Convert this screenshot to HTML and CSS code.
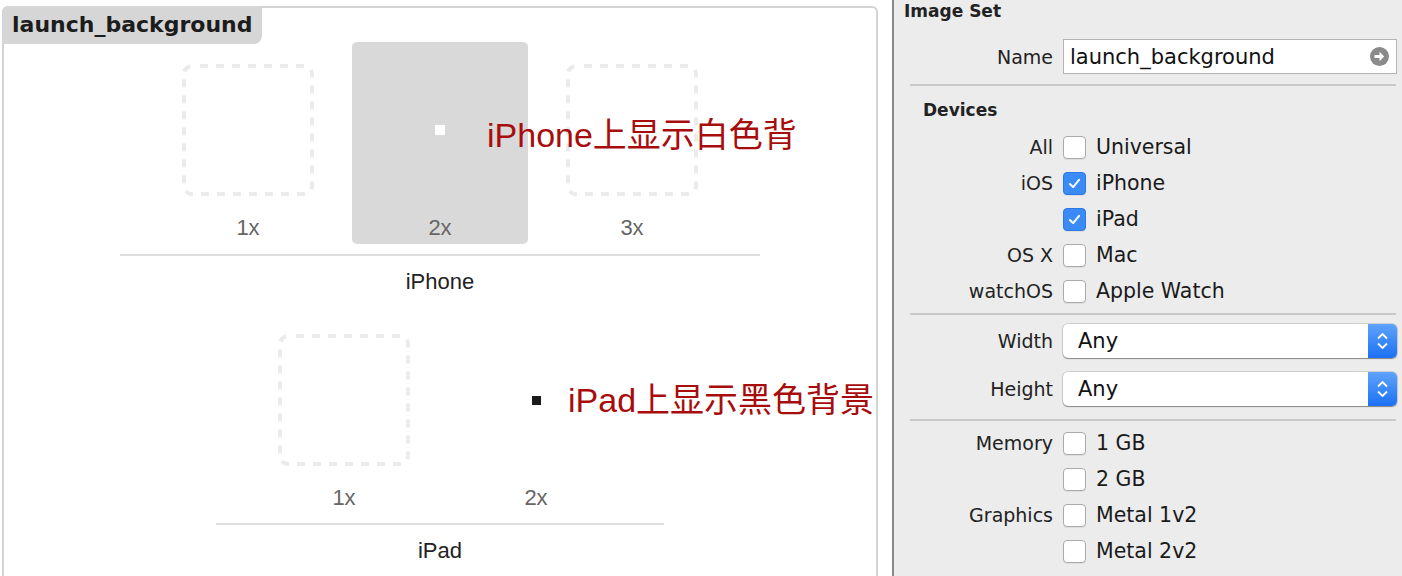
FILE: index.html
```html
<!DOCTYPE html>
<html lang="en">
<head>
<meta charset="UTF-8">
<title>launch_background</title>
<link rel="stylesheet" href="styles.css">
</head>
<body>
<div class="window">
  <div class="editor">
    <div class="canvas">
      <div class="tab">launch_background</div>

      <div class="group group-iphone">
        <div class="cells">
          <div class="cell">
            <svg class="slot" viewBox="0 0 132 132"><rect x="2" y="2" width="128" height="128" rx="8"/></svg>
            <span class="scale">1x</span>
          </div>
          <div class="cell selected">
            <div class="slot"><span class="pixel pixel-white"></span></div>
            <span class="scale">2x</span>
          </div>
          <div class="cell">
            <svg class="slot" viewBox="0 0 132 132"><rect x="2" y="2" width="128" height="128" rx="8"/></svg>
            <span class="scale">3x</span>
          </div>
        </div>
        <div class="device">iPhone</div>
      </div>

      <div class="group group-ipad">
        <div class="cells">
          <div class="cell">
            <svg class="slot" viewBox="0 0 132 132"><rect x="2" y="2" width="128" height="128" rx="8"/></svg>
            <span class="scale">1x</span>
          </div>
          <div class="cell">
            <div class="slot"><span class="pixel pixel-black"></span></div>
            <span class="scale">2x</span>
          </div>
        </div>
        <div class="device">iPad</div>
      </div>

      <!-- annotations -->
      <p class="note note-iphone">iPhone上显示白色背</p>
      <p class="note note-ipad">iPad上显示黑色背景</p>
    </div>
  </div>

  <div class="inspector">
    <div class="title">Image Set</div>

    <div class="row name-row">
      <span class="label">Name</span>
      <div class="field">
        <span>launch_background</span>
        <svg class="go" viewBox="0 0 19 19"><circle cx="9.5" cy="9.5" r="9.5"/><path d="M4.5 8h5V4.8L14.2 9.5 9.5 14.2V11h-5z"/></svg>
      </div>
    </div>

    <div class="sep"></div>
    <div class="section">Devices</div>

    <div class="row check-row">
      <span class="label">All</span>
      <label class="check"><span class="box"></span>Universal</label>
    </div>
    <div class="row check-row">
      <span class="label">iOS</span>
      <label class="check"><span class="box on"><svg viewBox="0 0 23 23"><polyline points="6.5,12 10,15.5 16.5,7.5"/></svg></span>iPhone</label>
    </div>
    <div class="row check-row">
      <span class="label"></span>
      <label class="check"><span class="box on"><svg viewBox="0 0 23 23"><polyline points="6.5,12 10,15.5 16.5,7.5"/></svg></span>iPad</label>
    </div>
    <div class="row check-row">
      <span class="label">OS X</span>
      <label class="check"><span class="box"></span>Mac</label>
    </div>
    <div class="row check-row">
      <span class="label">watchOS</span>
      <label class="check"><span class="box"></span>Apple Watch</label>
    </div>

    <div class="sep sep-tight"></div>

    <div class="row popup-row first">
      <span class="label">Width</span>
      <div class="popup"><span>Any</span><span class="stepper"><svg viewBox="0 0 29 34"><path d="M10 14.5l4.5-4.5 4.5 4.5M10 19.5l4.5 4.5 4.5-4.5"/></svg></span></div>
    </div>
    <div class="row popup-row">
      <span class="label">Height</span>
      <div class="popup"><span>Any</span><span class="stepper"><svg viewBox="0 0 29 34"><path d="M10 14.5l4.5-4.5 4.5 4.5M10 19.5l4.5 4.5 4.5-4.5"/></svg></span></div>
    </div>

    <div class="sep sep-popup"></div>

    <div class="row check-row">
      <span class="label">Memory</span>
      <label class="check"><span class="box"></span>1 GB</label>
    </div>
    <div class="row check-row">
      <span class="label"></span>
      <label class="check"><span class="box"></span>2 GB</label>
    </div>
    <div class="row check-row">
      <span class="label">Graphics</span>
      <label class="check"><span class="box"></span>Metal 1v2</label>
    </div>
    <div class="row check-row">
      <span class="label"></span>
      <label class="check"><span class="box"></span>Metal 2v2</label>
    </div>
    <div class="row check-row">
      <span class="label"></span>
      <label class="check"><span class="box"></span></label>
    </div>
  </div>
</div>
</body>
</html>
```

FILE: styles.css
```css
* {
margin: 0;
padding: 0;
box-sizing: border-box;
}
body {
background-color: #fff;
font-family: "DejaVu Sans", sans-serif;
color: #222;
height: 576px;
overflow: hidden;
}
.window {
display: flex;
height: 576px;
overflow: hidden;
}

/* left: asset catalog canvas */
.editor {
width: 892px;
padding: 6px 14px 0 2px;
}
.canvas {
position: relative;
height: 100%;
border: 2px solid #d3d3d3;
border-bottom: 0;
border-radius: 6px 6px 0 0;
}
.tab {
position: absolute;
top: -2px;
left: -2px;
width: 260px;
height: 38px;
padding-left: 10px;
background-color: #d6d6d6;
border-radius: 6px 0 8px 0;
font-weight: bold;
font-size: 22px;
line-height: 38px;
color: #1c1c1c;
}
.group {
margin: 0 auto;
text-align: center;
}
.group-iphone {
width: 640px;
margin-top: 34px;
}
.group-ipad {
width: 448px;
margin-top: 18px;
}
.cells {
display: flex;
justify-content: center;
gap: 16px;
padding-bottom: 10px;
border-bottom: 2px solid #dedede;
}
.group-ipad .cells {
padding-bottom: 9px;
}
.cell {
width: 176px;
height: 202px;
padding-top: 22px;
display: flex;
flex-direction: column;
align-items: center;
border-radius: 5px;
}
.cell.selected {
background-color: #d9d9d9;
}
.slot {
width: 132px;
height: 132px;
display: flex;
align-items: center;
justify-content: center;
}
.slot rect {
fill: none;
stroke: #ebebeb;
stroke-width: 4;
stroke-dasharray: 8 8;
stroke-dashoffset: 8;
}
.pixel {
display: block;
width: 10px;
height: 10px;
}
.pixel-white {
background-color: #fff;
}
.pixel-black {
width: 9px;
height: 9px;
background-color: #1a1a1a;
}
.scale {
margin-top: 20px;
font-family: "Liberation Sans", Arial, sans-serif;
font-size: 22px;
line-height: 24px;
color: #666;
}
.device {
margin-top: 14px;
font-family: "Liberation Sans", Arial, sans-serif;
font-size: 22px;
line-height: 24px;
color: #222;
}
.note {
position: absolute;
font-family: "Liberation Sans", "Noto Sans CJK SC", sans-serif;
font-size: 34px;
line-height: 40px;
color: #a80d0d;
white-space: nowrap;
}
.note-iphone {
left: 483px;
top: 107px;
}
.note-ipad {
left: 564px;
top: 372px;
}

/* right: attributes inspector */
.inspector {
flex: 1;
background-color: #ececec;
border-left: 2px solid #8a8a8a;
padding-right: 5px;
overflow: hidden;
}
.title {
padding-left: 10px;
font-weight: bold;
font-size: 17px;
line-height: 22px;
color: #222;
}
.row {
display: grid;
grid-template-columns: 159px 1fr;
column-gap: 10px;
align-items: center;
}
.label {
text-align: right;
font-size: 19px;
color: #222;
}
.name-row {
margin-top: 17px;
}
.field {
height: 35px;
display: flex;
align-items: center;
justify-content: space-between;
padding: 0 7px 0 6px;
background-color: #fff;
border: 1px solid #b4b4b4;
font-size: 21px;
color: #111;
}
.go {
width: 19px;
height: 19px;
}
.go circle {
fill: #8a8a8a;
}
.go path {
fill: #fff;
}
.sep {
height: 2px;
margin: 10px 1px 0 16px;
background-color: #c9c9c9;
}
.sep-tight {
margin-top: 4px;
}
.sep-popup {
margin-top: 13px;
}
.section {
margin-top: 12px;
padding-left: 29px;
font-weight: bold;
font-size: 17px;
line-height: 24px;
color: #222;
}
.check-row {
height: 36px;
}
.section + .check-row {
margin-top: 7px;
}
.sep-popup + .check-row {
margin-top: 4px;
}
.check {
display: flex;
align-items: center;
gap: 10px;
font-size: 20.5px;
color: #1a1a1a;
}
.box {
width: 23px;
height: 23px;
background-color: #fff;
border: 1px solid #aaa;
border-radius: 4px;
box-shadow: 0 1px 0 rgba(0, 0, 0, 0.06);
}
.box.on {
background-color: #3a8bf6;
border-color: #2c78e6;
}
.box svg {
display: block;
width: 21px;
height: 21px;
}
.box polyline {
fill: none;
stroke: #fff;
stroke-width: 2.2;
stroke-linecap: round;
stroke-linejoin: round;
}
.popup-row {
margin-top: 14px;
}
.popup-row.first {
margin-top: 9px;
}
.popup {
height: 34px;
display: flex;
align-items: center;
justify-content: space-between;
padding-left: 15px;
background-color: #fff;
border-radius: 5px;
box-shadow: 0 0 0 1px rgba(0, 0, 0, 0.12), 0 1px 1px rgba(0, 0, 0, 0.35);
font-size: 21px;
color: #111;
}
.stepper {
width: 29px;
height: 34px;
border-radius: 0 5px 5px 0;
background: linear-gradient(#5ea3fb, #1c70f2);
}
.stepper svg {
display: block;
width: 29px;
height: 34px;
}
.stepper path {
fill: none;
stroke: #fff;
stroke-width: 1.8;
}
```
